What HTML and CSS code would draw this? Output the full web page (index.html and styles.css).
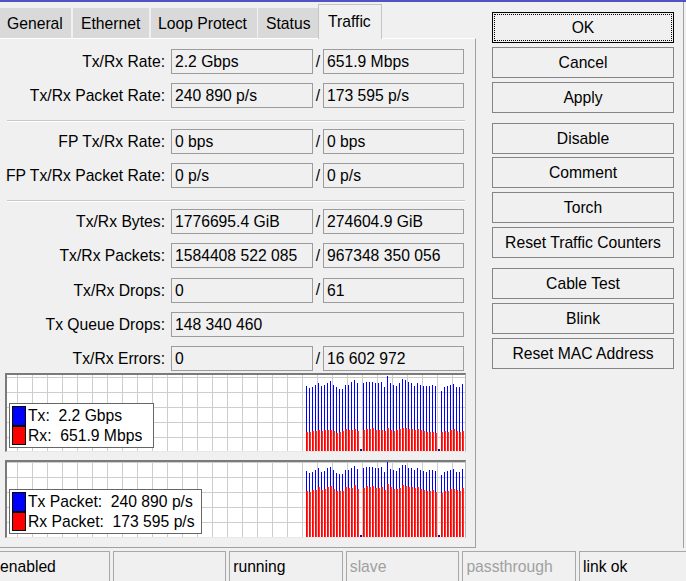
FILE: index.html
```html
<!DOCTYPE html>
<html>
<head>
<meta charset="utf-8">
<title>Interface</title>
<link rel="stylesheet" href="styles.css">
</head>
<body>
<div class="stripe"></div>
<div class="main">
  <div class="left">
    <div class="tabs">
      <div class="tab t-general">General</div>
      <div class="tab t-ethernet">Ethernet</div>
      <div class="tab t-loop">Loop Protect</div>
      <div class="tab t-status">Status</div>
      <div class="tab tab-active">Traffic</div>
    </div>
    <div class="panel">
      <div class="group">
        <div class="row"><div class="label">Tx/Rx Rate:</div><div class="field f1">2.2 Gbps</div><div class="slash">/</div><div class="field f2">651.9 Mbps</div></div>
        <div class="row"><div class="label">Tx/Rx Packet Rate:</div><div class="field f1">240 890 p/s</div><div class="slash">/</div><div class="field f2">173 595 p/s</div></div>
      </div>
      <div class="sep"></div>
      <div class="group">
        <div class="row"><div class="label">FP Tx/Rx Rate:</div><div class="field f1">0 bps</div><div class="slash">/</div><div class="field f2">0 bps</div></div>
        <div class="row"><div class="label">FP Tx/Rx Packet Rate:</div><div class="field f1">0 p/s</div><div class="slash">/</div><div class="field f2">0 p/s</div></div>
      </div>
      <div class="sep"></div>
      <div class="group">
        <div class="row"><div class="label">Tx/Rx Bytes:</div><div class="field f1">1776695.4 GiB</div><div class="slash">/</div><div class="field f2">274604.9 GiB</div></div>
        <div class="row"><div class="label">Tx/Rx Packets:</div><div class="field f1">1584408 522 085</div><div class="slash">/</div><div class="field f2">967348 350 056</div></div>
        <div class="row"><div class="label">Tx/Rx Drops:</div><div class="field f1">0</div><div class="slash">/</div><div class="field f2">61</div></div>
        <div class="row"><div class="label">Tx Queue Drops:</div><div class="field fwide">148 340 460</div></div>
        <div class="row"><div class="label">Tx/Rx Errors:</div><div class="field f1">0</div><div class="slash">/</div><div class="field f2">16 602 972</div></div>
      </div>
      <div class="chart chart1" id="g1">
        <div class="legend legend1">
          <div class="lrow"><span class="sw sw-blue"></span><span class="ltext">Tx:  2.2 Gbps</span></div>
          <div class="lrow"><span class="sw sw-red"></span><span class="ltext">Rx:  651.9 Mbps</span></div>
        </div>
      </div>
      <div class="chart chart2" id="g2">
        <div class="legend legend2">
          <div class="lrow"><span class="sw sw-blue"></span><span class="ltext">Tx Packet:  240 890 p/s</span></div>
          <div class="lrow"><span class="sw sw-red"></span><span class="ltext">Rx Packet:  173 595 p/s</span></div>
        </div>
      </div>
    </div>
  </div>
  <div class="right">
    <div class="btn-group">
      <div class="btn btn-default">OK</div>
      <div class="btn">Cancel</div>
      <div class="btn">Apply</div>
    </div>
    <div class="btn-group">
      <div class="btn">Disable</div>
      <div class="btn">Comment</div>
      <div class="btn">Torch</div>
      <div class="btn">Reset Traffic Counters</div>
    </div>
    <div class="btn-group">
      <div class="btn">Cable Test</div>
      <div class="btn">Blink</div>
      <div class="btn">Reset MAC Address</div>
    </div>
  </div>
</div>
<div class="statusbar">
  <div class="cell">enabled</div>
  <div class="cell"></div>
  <div class="cell">running</div>
  <div class="cell cell-dim">slave</div>
  <div class="cell cell-dim">passthrough</div>
  <div class="cell cell-last">link ok</div>
</div>
<script src="script.js"></script>
</body>
</html>
```

FILE: styles.css
```css
html, body {
  margin: 0;
  padding: 0;
}
body {
  width: 686px;
  height: 581px;
  overflow: hidden;
  background: #f0f0f0;
  font-family: "Liberation Sans", Arial, sans-serif;
  font-size: 15.7px;
  color: #000;
}
.stripe {
  height: 2px;
  background: #5252c6;
}
.main {
  display: flex;
  height: 546px;
}
.left {
  flex: none;
  width: 476px;
  display: flex;
  flex-direction: column;
}
.tabs {
  height: 36px;
  display: flex;
  align-items: flex-end;
}
.tab {
  box-sizing: border-box;
  height: 30px;
  line-height: 32px;
  background: #d9d9d9;
  padding-left: 7px;
  margin-right: 2px;
  white-space: nowrap;
}
.t-general { width: 71px; }
.t-ethernet { width: 76px; padding-left: 8px; }
.t-loop { width: 106px; margin-right: 1px; }
.t-status { width: 60px; padding-left: 8px; margin-right: 0; }
.tab-active {
  position: relative;
  z-index: 1;
  width: 64px;
  height: 35px;
  margin-bottom: -1px;
  line-height: 34px;
  padding-left: 9px;
  background: #f0f0f0;
  border: 1px solid #c4c4c4;
  border-bottom: none;
}
.panel {
  box-sizing: border-box;
  height: 510px;
  border-top: 1px solid #ffffff;
  border-right: 1px solid #a0a0a0;
  border-bottom: 1px solid #a0a0a0;
  padding-top: 10px;
  display: flex;
  flex-direction: column;
}
.group {
  display: flex;
  flex-direction: column;
  gap: 9.25px;
}
.row {
  display: flex;
  align-items: center;
  height: 25px;
}
.label {
  width: 165px;
  margin-right: 6px;
  text-align: right;
  white-space: nowrap;
  padding-top: 1px;
}
.field {
  box-sizing: border-box;
  height: 25px;
  line-height: 24px;
  border: 1px solid #9c9c9c;
  padding-left: 3px;
  white-space: nowrap;
  overflow: hidden;
}
.f1 { width: 142px; }
.f2 { width: 141px; }
.fwide { width: 293px; }
.slash {
  width: 10px;
  text-align: center;
}
.sep {
  margin: 11.75px 0 7px 7px;
  width: 458px;
  height: 1px;
  border-top: 1px solid #c8c8c8;
  background: #ffffff;
}
.chart {
  position: relative;
  box-sizing: border-box;
  width: 461px;
  margin-left: 5px;
  border-top: 2px solid #7a7a7a;
  border-left: 2px solid #7a7a7a;
  border-right: 1px solid #b4b4b4;
  border-bottom: 1px solid #e8e8e8;
  background-color: #ffffff;
  background-image:
    linear-gradient(to right, #cdcdcd 1px, transparent 1px),
    linear-gradient(to bottom, #cdcdcd 1px, transparent 1px);
  background-size: 15px 15px;
  overflow: hidden;
}
.chart1 {
  height: 79px;
  margin-top: 2px;
  background-position: 10px 2px;
}
.chart2 {
  height: 78px;
  margin-top: 8px;
  background-position: 10px 0px;
}
.bars {
  position: absolute;
  left: 0;
  top: 0;
}
.legend {
  position: absolute;
  z-index: 1;
  left: 2px;
  bottom: 3px;
  box-sizing: border-box;
  height: 45px;
  padding: 2px 0 0 2px;
  background: #ffffff;
  border: 1px solid #666666;
}
.legend1 { width: 145px; }
.legend2 { width: 193px; }
.lrow {
  display: flex;
  align-items: center;
  height: 19.5px;
}
.sw {
  box-sizing: border-box;
  width: 14px;
  height: 19.5px;
  border: 1px solid #000;
  margin-right: 2px;
}
.sw-blue { background: #0000ff; }
.sw-red { background: #ff0000; }
.ltext {
  white-space: pre;
  line-height: 19px;
}
.right {
  flex: none;
  width: 191px;
  border-right: 1px solid #a0a0a0;
  padding-top: 10px;
  padding-left: 16px;
  display: flex;
  flex-direction: column;
  gap: 10px;
}
.btn-group {
  display: flex;
  flex-direction: column;
  gap: 3.8px;
}
.btn {
  position: relative;
  box-sizing: border-box;
  width: 182px;
  height: 31px;
  line-height: 29px;
  text-align: center;
  border: 1px solid #858585;
  background: #f0f0f0;
  white-space: nowrap;
}
.btn-default {
  border-color: #000;
}
.btn-default::after {
  content: "";
  position: absolute;
  left: 1px;
  top: 1px;
  right: 1px;
  bottom: 1px;
  border: 1px dotted #000;
}
.statusbar {
  display: flex;
  gap: 3px;
  margin-top: 3px;
  margin-left: -4px;
}
.cell {
  box-sizing: border-box;
  width: 113.6px;
  height: 30px;
  line-height: 29px;
  padding-left: 3px;
  border: 1px solid #a8a8a8;
  border-bottom: none;
  white-space: nowrap;
  flex: none;
}
.cell-dim { color: #a0a0a0; }
.cell-last { width: 112px; }
```

FILE: script.js
```js
(function () {
  var NS = 'http://www.w3.org/2000/svg';
  var charts = {
    g1: {
      off: 5,
      blue: [47,53,50,45,39,47,45,39,33,45,51,57,57,45,45,36,30,39,null,39,36,36,36,39,39,36,51,18,39,45,47,39,27,30,36,39,47,39,45,47,47,47,45,47,null,63,51,47,45,42,51,51,42],
      red: [186,186,183,183,180,183,180,180,180,183,189,186,183,177,180,180,177,183,null,180,177,177,174,180,180,180,183,174,180,183,180,177,174,174,177,177,180,177,180,183,186,186,186,189,null,186,183,186,180,177,183,186,183]
    },
    g2: {
      off: 7,
      blue: [47,53,50,45,39,50,47,39,36,45,53,57,57,45,45,39,33,42,null,39,36,36,36,39,39,36,51,21,42,45,47,39,30,30,39,39,45,39,45,47,50,45,45,47,null,60,51,47,45,42,51,51,42],
      red: [108,111,105,105,96,105,102,96,93,102,108,108,108,96,99,99,90,102,null,99,93,96,93,99,99,96,105,87,96,102,102,99,90,93,96,96,99,96,102,105,108,108,105,111,null,114,108,108,102,102,105,108,99]
    }
  };
  function rect(svg, x, y, w, h, fill) {
    var r = document.createElementNS(NS, 'rect');
    r.setAttribute('x', x);
    r.setAttribute('y', y);
    r.setAttribute('width', w);
    r.setAttribute('height', h);
    r.setAttribute('fill', fill);
    svg.appendChild(r);
  }
  Object.keys(charts).forEach(function (id) {
    var el = document.getElementById(id);
    var d = charts[id];
    var w = el.clientWidth, h = el.clientHeight;
    var svg = document.createElementNS(NS, 'svg');
    svg.setAttribute('class', 'bars');
    svg.setAttribute('width', w);
    svg.setAttribute('height', h);
    svg.setAttribute('shape-rendering', 'crispEdges');
    for (var i = 0; i < d.blue.length; i++) {
      var x = 299 + 3 * i;
      if (d.blue[i] === null) {
        rect(svg, x, h - 2, 2, 2, '#10108a');
        continue;
      }
      var bt = Math.round(d.blue[i] / 3 - d.off);
      var rt = Math.round(d.red[i] / 3 - d.off);
      rect(svg, x, bt, 1, h - bt, '#0000ff');
      rect(svg, x, rt, 1, h - rt, '#ff0000');
      rect(svg, x + 1, rt, 1, h - rt, '#ff3030');
    }
    el.insertBefore(svg, el.firstChild);
  });
})();
```
